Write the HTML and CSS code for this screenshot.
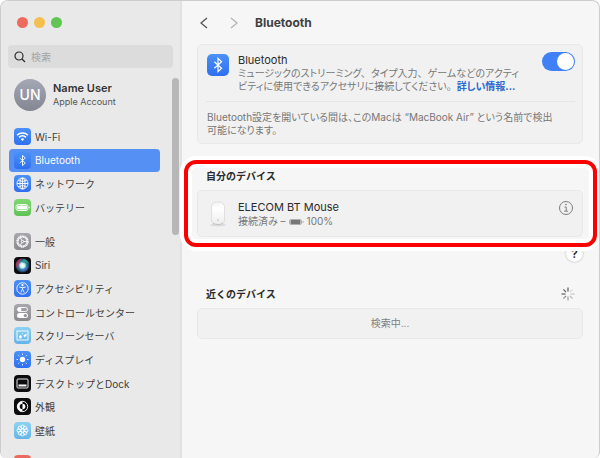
FILE: index.html
```
<!DOCTYPE html>
<html lang="ja">
<head>
  <meta charset="UTF-8">
  <meta name="viewport" content="width=device-width, initial-scale=1.0">
  <title>Bluetooth</title>
  <link rel="stylesheet" href="styles.css">
</head>
<body>
  <div class="window">
    <aside class="sidebar">
      <div class="window-buttons">
        <button type="button" class="dot close" aria-label="閉じる"></button>
        <button type="button" class="dot minimize" aria-label="しまう"></button>
        <button type="button" class="dot zoom" aria-label="拡大"></button>
      </div>

      <label class="search">
        <svg width="12" height="12" viewBox="0 0 12 12"><circle cx="5" cy="5" r="4"/><path d="M8 8l3 3"/></svg>
        <input type="search" placeholder="検索" aria-label="検索">
      </label>

      <div class="sidebar-body">
        <a href="#" class="account">
          <span class="avatar">UN</span>
          <span class="account-text">
            <strong>Name User</strong>
            <span>Apple Account</span>
          </span>
        </a>

        <nav>
          <ul class="menu network">
            <li><a href="#">
              <svg class="icon blue" viewBox="0 0 17 17"><g class="line"><path d="M3 7.200c3.200-3 7.800-3 11 0" stroke-width="1.500"/><path d="M5 9.400c2.100-1.900 4.900-1.900 7 0" stroke-width="1.500"/></g><path class="fill" d="M6.700 11c1.100-.9 2.500-.9 3.600 0l-1.800 2z"/></svg>
              Wi-Fi</a></li>
            <li><a href="#" class="active">
              <svg class="icon blue" viewBox="0 0 17 17"><path class="line" d="M5.700 6l5.600 5-2.800 2.600V3.400L11.300 6l-5.600 5"/></svg>
              Bluetooth</a></li>
            <li><a href="#">
              <svg class="icon blue" viewBox="0 0 17 17"><g class="line"><circle cx="8.500" cy="8.500" r="5.500"/><ellipse cx="8.500" cy="8.500" rx="2.600" ry="5.500"/><path d="M3 8.500h11M8.500 3v11M4.300 5.200c2.600 1.500 5.800 1.500 8.400 0M4.300 11.800c2.600-1.500 5.800-1.500 8.400 0"/></g></svg>
              ネットワーク</a></li>
            <li><a href="#">
              <svg class="icon green" viewBox="0 0 17 17"><rect class="line" x="2" y="5.500" width="12" height="6" rx="2"/><rect class="fill" x="3" y="6.500" width="10" height="4" rx="1"/><path class="line" d="M15.300 7.700v1.600"/></svg>
              バッテリー</a></li>
          </ul>
          <ul class="menu general">
            <li><a href="#">
              <svg class="icon gray" viewBox="0 0 17 17"><g class="line"><circle cx="8.500" cy="8.500" r="5.400" stroke-width="1.500" stroke-dasharray="1.300 .4"/><circle cx="8.500" cy="8.500" r="4.400"/><circle cx="8.500" cy="8.500" r="1.200"/><path d="M9.700 8.500h3.200M7.900 7.500L6.300 4.700M7.900 9.500l-1.600 2.800"/></g></svg>
              一般</a></li>
            <li><a href="#">
              <svg class="icon black" viewBox="0 0 17 17">
                <defs>
                  <radialGradient id="siri"><stop offset="0" stop-color="#fff"/><stop offset=".32" stop-color="#c9f2ec"/><stop offset=".6" stop-color="#2f86a8"/><stop offset="1" stop-color="#173351"/></radialGradient>
                </defs>
                <circle cx="8.500" cy="8.500" r="7" fill="url(#siri)"/>
                <path d="M2 6c1-3 4-4.500 7-4.200C6 3 4 6 4.500 12 2.500 11 1.500 8.500 2 6z" fill="#c5325e" opacity=".75"/>
                <path d="M9 2c3 0 5.500 2 6 5-2-2-4-2-6-1z" fill="#2ba58d" opacity=".8"/>
                <path d="M6 13c3 1 6-1 8-4 0 4-5 7-8 4z" fill="#4d63d6" opacity=".8"/>
              </svg>
              Siri</a></li>
            <li><a href="#">
              <svg class="icon blue" viewBox="0 0 17 17"><circle class="line" cx="8.500" cy="8.500" r="5.700"/><circle class="fill" cx="8.500" cy="5.200" r="1.100"/><path class="line" stroke-width="1.200" d="M5.300 7.100l3.200.6 3.200-.6M8.500 7.700v2M8.200 9.500l-1.400 3M8.800 9.500l1.400 3"/></svg>
              アクセシビリティ</a></li>
            <li><a href="#">
              <svg class="icon gray" viewBox="0 0 17 17"><rect class="line" x="3.500" y="3.500" width="10" height="4" rx="2"/><circle class="fill" cx="5.500" cy="5.500" r="2"/><rect class="fill" x="3" y="9" width="11" height="5" rx="2.500"/><circle cx="11.300" cy="11.500" r="1.600" fill="#929297"/></svg>
              コントロールセンター</a></li>
            <li><a href="#">
              <svg class="icon sky" viewBox="0 0 17 17"><rect class="line" x="3" y="4" width="11" height="9"/><path class="fill" d="M5 9l2-1 1 2-1 1.500H5.500zM8 6.500l1-.5v1.500zM9.500 8.500l3-2v2l-2 2z"/></svg>
              スクリーンセーバ</a></li>
            <li><a href="#">
              <svg class="icon blue" viewBox="0 0 17 17"><circle class="fill" cx="8.500" cy="8.500" r="2.700"/><path class="line" stroke-linecap="round" d="M8.500 3v.6M8.500 13.400v.6M3 8.500h.6M13.400 8.500h.6M4.600 4.600l.4.4M12 12l.4.4M12.400 4.600l-.4.4M5 12l-.4.4"/></svg>
              ディスプレイ</a></li>
            <li><a href="#">
              <svg class="icon black" viewBox="0 0 17 17"><rect class="line" x="3" y="4" width="11" height="9" rx="1"/><rect class="fill" x="4.500" y="9.500" width="8" height="2"/></svg>
              デスクトップとDock</a></li>
            <li><a href="#">
              <svg class="icon black" viewBox="0 0 17 17"><circle class="line" cx="8.500" cy="8.500" r="5.200"/><path class="fill" d="M8.500 3.300a5.200 5.200 0 0 0 0 10.400v-2.400a2.800 2.800 0 0 1 0-5.600z"/><path class="fill" d="M8.500 5.700a2.800 2.800 0 0 1 0 5.600z"/></svg>
              外観</a></li>
            <li><a href="#">
              <svg class="icon sky" viewBox="0 0 17 17"><g class="line"><circle cx="8.500" cy="8.500" r="1.500"/><circle cx="8.500" cy="4.800" r="1.800"/><circle cx="8.500" cy="12.200" r="1.800"/><circle cx="4.800" cy="8.500" r="1.800"/><circle cx="12.200" cy="8.500" r="1.800"/><circle cx="5.900" cy="5.900" r="1.800"/><circle cx="11.100" cy="5.900" r="1.800"/><circle cx="5.900" cy="11.100" r="1.800"/><circle cx="11.100" cy="11.100" r="1.800"/></g></svg>
              壁紙</a></li>
          </ul>
          <ul class="menu more">
            <li><a href="#" aria-label="通知">
              <svg class="icon red" viewBox="0 0 17 17"><path class="fill" d="M4 12V6h9v6z"/></svg>
            </a></li>
          </ul>
        </nav>
        <div class="scrollbar"></div>
      </div>
    </aside>

    <main class="content">
      <header class="toolbar">
        <button type="button" aria-label="戻る"><svg width="8" height="12" viewBox="0 0 8 12"><path d="M7 1L1 6l6 5"/></svg></button>
        <button type="button" class="disabled" aria-label="進む" disabled><svg width="8" height="12" viewBox="0 0 8 12"><path d="M1 1l6 5-6 5"/></svg></button>
        <h1>Bluetooth</h1>
      </header>

      <section class="card bluetooth">
        <div class="bluetooth-top">
          <svg class="icon large blue" viewBox="0 0 17 17"><path class="line" d="M5.700 6l5.600 5-2.800 2.600V3.400L11.300 6l-5.600 5"/></svg>
          <div class="bluetooth-text">
            <label for="power">Bluetooth</label>
            <p>ミュージックのストリーミング、&ensp;タイプ入力、&ensp;ゲームなどのアクティ<br>ビティに使用できるアクセサリに接続してください。&ensp;<a href="#">詳しい情報...</a></p>
          </div>
          <input type="checkbox" id="power" class="switch" checked>
        </div>
        <p class="note">Bluetooth設定を開いている間は、このMacは “MacBook Air” という名前で検出<br>可能になります。</p>
      </section>

      <section class="devices highlight">
        <h2>自分のデバイス</h2>
        <div class="card device">
          <svg class="mouse" width="18" height="26" viewBox="0 0 18 26">
            <defs>
              <linearGradient id="body" x2="0" y2="1"><stop offset="0" stop-color="#f4f4f4"/><stop offset=".3" stop-color="#fff"/><stop offset="1" stop-color="#ececec"/></linearGradient>
            </defs>
            <ellipse cx="9" cy="24" rx="8" ry="1.500" fill="#dcdcdc"/>
            <rect x="2.500" y="1" width="13" height="23" rx="5" fill="url(#body)" stroke="#d9d9d9" stroke-width=".8"/>
            <path d="M4 22c3 2 7 2 10 0" fill="none" stroke="#b5b5b5" stroke-width=".8"/>
            <circle cx="9" cy="19" r=".9" fill="#d0d0d0"/>
          </svg>
          <div class="device-text">
            <h3>ELECOM BT Mouse</h3>
            <p>接続済み –
              <svg width="15" height="6" viewBox="0 0 15 6"><rect x=".5" y=".5" width="12" height="5" rx="1.500" fill="none" stroke="#b0b0b0"/><rect x="1.500" y="1" width="10" height="4" rx=".8" fill="#777"/><path d="M14 2v2" stroke="#b0b0b0"/></svg>
              100%</p>
          </div>
          <button type="button" class="info" aria-label="情報">
            <svg width="16" height="16" viewBox="0 0 16 16"><circle cx="8" cy="8" r="6.500"/><path d="M6.500 7h1.700v4M6.300 11.200h3.600"/><circle class="point" cx="8" cy="4.600" r=".8"/></svg>
          </button>
        </div>
      </section>

      <div class="help-row">
        <button type="button" class="help">?</button>
      </div>

      <section class="devices">
        <div class="nearby-head">
          <h2>近くのデバイス</h2>
          <svg class="spinner" width="14" height="14" viewBox="0 0 14 14">
            <path d="M7 .5v4" stroke="#666"/>
            <path d="M9 5l2.600-2.600" stroke="#d8d8d8"/>
            <path d="M9.500 7h4" stroke="#d0d0d0"/>
            <path d="M9 9l2.600 2.600" stroke="#bbb"/>
            <path d="M7 9.500v4" stroke="#a5a5a5"/>
            <path d="M5 9l-2.600 2.600" stroke="#909090"/>
            <path d="M4.500 7h-4" stroke="#7c7c7c"/>
            <path d="M5 5L2.400 2.400" stroke="#6c6c6c"/>
          </svg>
        </div>
        <div class="card searching">検索中...</div>
      </section>
    </main>
  </div>
</body>
</html>
```
FILE: styles.css
```
* {
  box-sizing: border-box;
}
body {
  margin: 0;
  background: #fff;
  color: #2b2b2b;
  font-family: Inter, "Noto Sans CJK JP", sans-serif;
  font-size: 10px;
}
h1, h2, h3, p, ul {
  margin: 0;
  padding: 0;
}
a {
  color: inherit;
  text-decoration: none;
}
button {
  padding: 0;
  border: none;
  background: none;
}
svg {
  display: block;
  flex: none;
}
.window {
  display: flex;
  height: 100vh;
  overflow: hidden;
  border: 1px solid #cdcdcd;
  border-bottom: none;
  border-radius: 8px 8px 6px 6px;
  background: #f6f6f6;
}

/* Sidebar */
.sidebar {
  display: flex;
  flex: none;
  flex-direction: column;
  width: 181px;
  padding: 16px 0 0 7px;
  border-right: 2px solid #e1e1e1;
  background: #e9e9e9;
}
.window-buttons {
  display: flex;
  gap: 6px;
  padding-left: 9px;
}
.dot {
  width: 11px;
  height: 11px;
  border-radius: 50%;
}
.close {
  background: #ed6a5e;
}
.minimize {
  background: #f5bf4f;
}
.zoom {
  background: #61c554;
}
.search {
  display: flex;
  flex: none;
  align-items: center;
  gap: 5px;
  height: 23px;
  margin: 17px 7px 0 0;
  padding: 0 6px;
  border-radius: 4px;
  background: #dcdcdc;
}
.search svg {
  fill: none;
  stroke: #2b2b2b;
  stroke-width: 1.2;
}
.search input {
  width: 100%;
  padding: 0;
  border: none;
  outline: none;
  background: none;
  font: inherit;
}
.search input::placeholder {
  color: #a3a3a3;
}
.sidebar-body {
  position: relative;
  flex: 1;
  min-height: 0;
  padding-top: 11px;
  overflow: hidden;
}
.account {
  display: flex;
  align-items: center;
  gap: 7px;
  padding-left: 6px;
}
.avatar {
  width: 32px;
  border-radius: 50%;
  background: linear-gradient(#a4a8b5, #848692);
  color: #fff;
  font-size: 14px;
  font-weight: 500;
  line-height: 32px;
  text-align: center;
}
.account-text {
  display: flex;
  flex-direction: column;
  color: #555;
  font-size: 9px;
  line-height: 14px;
}
.account-text strong {
  color: #333;
  font-size: 11px;
  font-weight: 600;
}
.menu {
  display: grid;
  grid-auto-rows: 1fr;
  margin: 11px 20px 0 1px;
  list-style: none;
}
.network {
  height: 94px;
  margin-top: 14px;
}
.general {
  height: 212px;
}
.more {
  margin-top: 13px;
}
.menu a {
  display: flex;
  align-items: center;
  gap: 4px;
  height: 100%;
  padding-left: 5px;
  border-radius: 4px;
  color: #3d3d3d;
  white-space: nowrap;
}
.menu .active {
  background: #5590f5;
  color: #fff;
}
.scrollbar {
  position: absolute;
  top: 10px;
  right: 1px;
  width: 7px;
  height: 157px;
  border-radius: 4px;
  background: #b7b7b7;
}

/* Icons */
.icon {
  width: 17px;
  height: 17px;
  border-radius: 4px;
}
.icon.large {
  width: 22px;
  height: 22px;
  border-radius: 5px;
}
.line {
  fill: none;
  stroke: #fff;
  stroke-width: 0.9;
}
.fill {
  fill: #fff;
}
.blue {
  background: linear-gradient(#4b91f7, #2f6ff0);
}
.green {
  background: linear-gradient(#7fd873, #5fc255);
}
.gray {
  background: linear-gradient(#a8a8ad, #88888d);
}
.black {
  background: #0c0c0e;
}
.sky {
  background: linear-gradient(#8bd2f5, #65b3e6);
}
.red {
  background: #ea6a61;
}

/* Content */
.content {
  flex: 1;
  min-width: 0;
  padding: 0 16px 0 15px;
}
.toolbar {
  display: flex;
  align-items: center;
  height: 43px;
  padding-left: 3px;
}
.toolbar button {
  width: 8px;
  margin-right: 22px;
}
.toolbar .disabled {
  margin-right: 17px;
}
.toolbar path {
  fill: none;
  stroke: #555;
  stroke-width: 1.3;
}
.toolbar .disabled path {
  stroke: #b4b4b4;
}
h1 {
  color: #404040;
  font-size: 12px;
  font-weight: 700;
}
h2 {
  font-size: 10px;
  font-weight: 700;
  line-height: 14px;
}
.card {
  border: 1px solid #e9e9e9;
  border-radius: 5px;
  background: #f1f1f1;
}
.bluetooth {
  padding: 0 7px 6px 8px;
}
.bluetooth-top {
  display: flex;
  gap: 9px;
  height: 57px;
  padding: 9px 0 0 1px;
  border-bottom: 1px solid #e6e6e6;
}
.bluetooth-text {
  flex: 1;
  min-width: 0;
}
.bluetooth-text label,
.device h3 {
  display: block;
  font-size: 11px;
  font-weight: 400;
  line-height: 13px;
}
.bluetooth p,
.device p {
  color: #777;
  font-feature-settings: "palt";
  line-height: 13px;
  white-space: nowrap;
}
.bluetooth-text a {
  color: #2f68cf;
  font-weight: 700;
}
.switch {
  position: relative;
  flex: none;
  width: 33px;
  height: 19px;
  margin: -2px 0 0;
  border-radius: 10px;
  background: #3f80f6;
  appearance: none;
}
.switch::after {
  content: "";
  position: absolute;
  top: 1px;
  right: 1px;
  width: 17px;
  height: 17px;
  border-radius: 50%;
  background: #fff;
}
.bluetooth .note {
  padding: 9px 0 0 1px;
}
.devices h2 {
  padding-left: 9px;
}
.highlight {
  position: relative;
  margin-top: 25px;
}
.highlight::after {
  content: "";
  position: absolute;
  inset: -9px -14px -10px -13px;
  border: 4px solid #fe0000;
  border-radius: 12px;
  box-shadow: 0 0 0 4px #fff, inset 0 0 0 4px #fff;
  pointer-events: none;
}
.device {
  display: flex;
  align-items: center;
  gap: 11px;
  height: 47px;
  margin-top: 7px;
  padding: 0 8px 0 11px;
}
.device-text {
  flex: 1;
}
.device h3 {
  line-height: 16px;
}
.device p {
  display: flex;
  align-items: center;
  gap: 3px;
}
.info {
  align-self: flex-start;
  margin-top: 9px;
}
.info svg {
  fill: none;
  stroke: #7d7d7d;
}
.info .point {
  fill: #7d7d7d;
  stroke: none;
}
.help-row {
  display: flex;
  justify-content: flex-end;
  margin-top: 8px;
}
.help {
  width: 17px;
  height: 17px;
  border-radius: 50%;
  background: #fff;
  box-shadow: 0 0 2px rgba(0, 0, 0, 0.35);
  color: #222;
  font: 600 12px Inter, sans-serif;
}
.nearby-head {
  display: flex;
  align-items: center;
  justify-content: space-between;
  margin-top: 25px;
  padding-right: 8px;
}
.spinner {
  stroke-width: 1.3;
}
.searching {
  height: 31px;
  margin-top: 7px;
  color: #808080;
  line-height: 29px;
  text-align: center;
}
```
